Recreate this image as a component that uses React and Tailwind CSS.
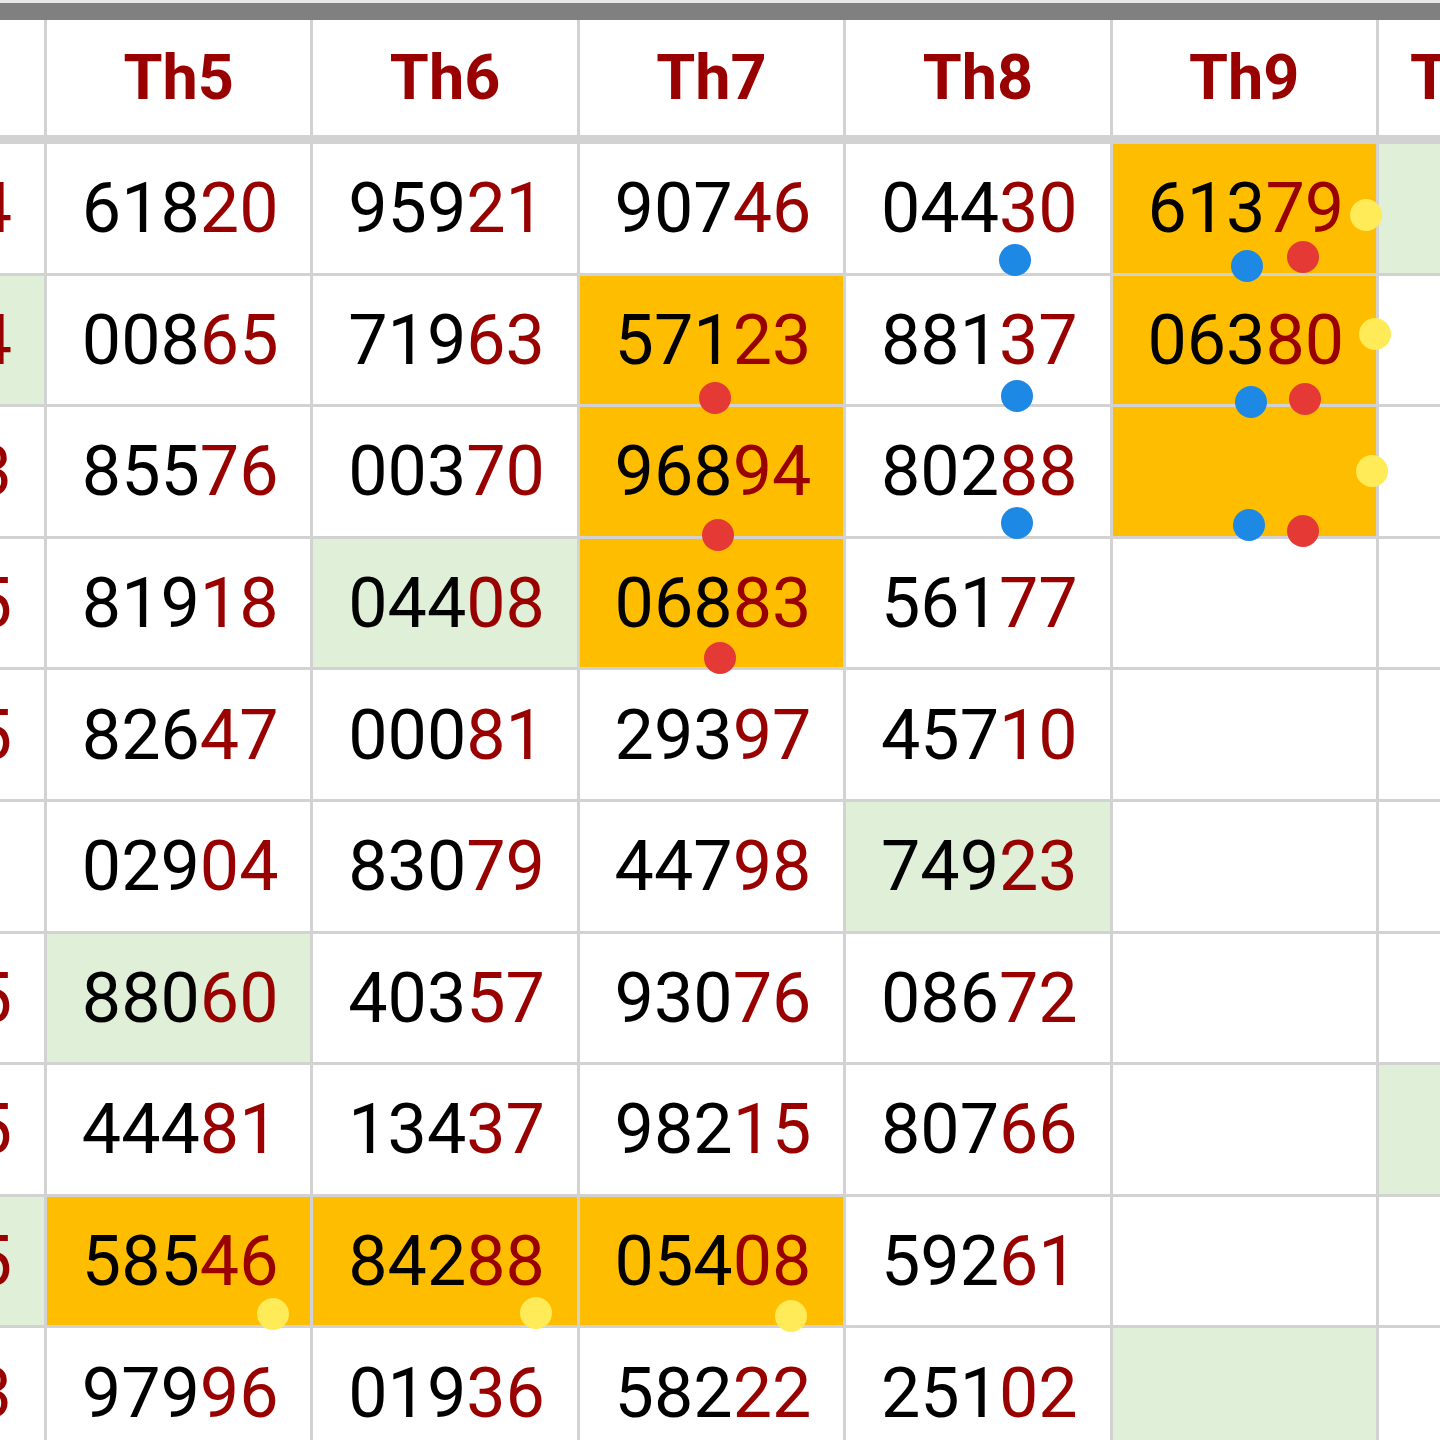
const DOT = {
  y: "bg-[#ffeb57]",
  b: "bg-[#1e88e5]",
  r: "bg-[#e53935]",
};

const HEADERS = ["Th4", "Th5", "Th6", "Th7", "Th8", "Th9", "Th10"];

// each cell: [number, bg, dots]
// bg: o = orange, g = green
const ROWS = [
  [["53014"], ["61820"], ["95921"], ["90746"], ["04430", "", [["b", 153, 100]]], ["61379", "o", [["y", 237, 55], ["b", 118, 106], ["r", 174, 97]]], ["", "g"]],
  [["27754", "g"], ["00865"], ["71963"], ["57123", "o", [["r", 119, 106]]], ["88137", "", [["b", 155, 104]]], ["06380", "o", [["y", 246, 42], ["b", 122, 110], ["r", 176, 107]]], [""]],
  [["40213"], ["85576"], ["00370"], ["96894", "o", [["r", 122, 112]]], ["80288", "", [["b", 155, 100]]], ["", "o", [["y", 243, 48], ["b", 120, 102], ["r", 174, 108]]], [""]],
  [["19865"], ["81918"], ["04408", "g"], ["06883", "o", [["r", 124, 103]]], ["56177"], [""], [""]],
  [["66325"], ["82647"], ["00081"], ["29397"], ["45710"], [""], [""]],
  [[""], ["02904"], ["83079"], ["44798"], ["74923", "g"], [""], [""]],
  [["31045"], ["88060", "g"], ["40357"], ["93076"], ["08672"], [""], [""]],
  [["72815"], ["44481"], ["13437"], ["98215"], ["80766"], [""], ["", "g"]],
  [["05935", "g"], ["58546", "o", [["y", 210, 101]]], ["84288", "o", [["y", 207, 100]]], ["05408", "o", [["y", 195, 103]]], ["59261"], [""], [""]],
  [["47163"], ["97996"], ["01936"], ["58222"], ["25102"], ["", "g"], [""]],
];

function Cell({ value, bg, dots }) {
  const bgClass = bg === "o" ? "bg-[#ffbd00]" : bg === "g" ? "bg-[#dfefd8]" : "bg-white";
  return (
    <div className={`relative flex items-center justify-center ${bgClass}`}>
      {value && (
        <span className="pl-[3px] text-[70px] leading-none">
          <span className="text-black">{value.slice(0, 3)}</span>
          <span className="text-[#990000]">{value.slice(3)}</span>
        </span>
      )}
      {dots &&
        dots.map(([c, left, top], i) => (
          <span
            key={i}
            className={`absolute z-10 w-8 h-8 rounded-full ${DOT[c]}`}
            style={{ left, top }}
          />
        ))}
    </div>
  );
}

export default function App() {
  return (
    <div className="w-[1440px] h-[1440px] overflow-hidden bg-white font-['Roboto',sans-serif]">
      <div className="h-[3px] bg-[#e8e8e8]" />
      <div className="h-[17px] bg-[#808080]" />
      <div className="ml-[-219.4px] w-max bg-[#d2d2d2]">
        <div className="grid grid-cols-[repeat(7,263.4px)] gap-x-[3px] h-[115px]">
          {HEADERS.map((h) => (
            <div
              key={h}
              className={`flex items-center bg-white ${h === "Th10" ? "justify-start pl-[31px]" : "justify-center"}`}
            >
              <span className="text-[63px] font-bold leading-none text-[#990000]">{h}</span>
            </div>
          ))}
        </div>
        <div className="h-[9px]" />
        <div className="grid grid-cols-[repeat(7,263.4px)] auto-rows-[128.6px] gap-x-[3px] gap-y-[3px]">
          {ROWS.map((row, r) =>
            row.map(([value, bg, dots], c) => (
              <Cell key={`${r}-${c}`} value={value} bg={bg} dots={dots} />
            ))
          )}
        </div>
      </div>
    </div>
  );
}
